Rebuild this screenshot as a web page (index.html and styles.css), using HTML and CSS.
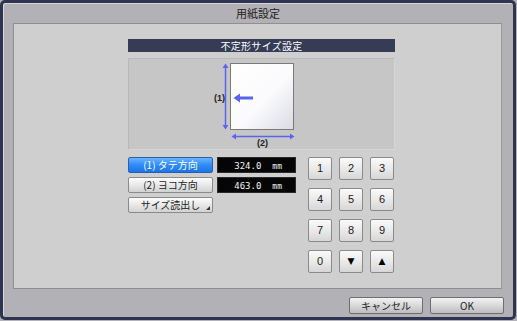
FILE: index.html
```html
<!DOCTYPE html>
<html lang="ja">
<head>
	<meta charset="UTF-8">
	<title>用紙設定</title>
	<link rel="stylesheet" href="styles.css">
</head>
<body>
	<div class="frame">
		<div class="title">用紙設定</div>
		<div class="panel">
			<div class="head">不定形サイズ設定</div>
			<div class="diagram">
				<svg width="265" height="90" viewBox="0 0 265 90">
					<defs>
						<linearGradient id="paper" x1="0" y1="0" x2="1" y2="1">
							<stop offset="0" stop-color="#ffffff"/>
							<stop offset="0.55" stop-color="#fbfbfd"/>
							<stop offset="1" stop-color="#d9dbe3"/>
						</linearGradient>
					</defs>
					<rect x="101.5" y="4.5" width="63" height="66" fill="url(#paper)" stroke="#7a7a7a"/>
					<!-- vertical (1) -->
					<line x1="96.5" y1="7" x2="96.5" y2="68" stroke="#5a64f0" stroke-width="1.5"/>
					<path d="M93.5 9 L96.5 4.5 L99.5 9 Z M93.5 66 L96.5 70.5 L99.5 66 Z" fill="#5a64f0"/>
					<!-- horizontal (2) -->
					<line x1="106" y1="77.5" x2="162" y2="77.5" stroke="#5a64f0" stroke-width="1.5"/>
					<path d="M107 74.5 L102.5 77.5 L107 80.5 Z M161 74.5 L165.5 77.5 L161 80.5 Z" fill="#5a64f0"/>
					<!-- feed arrow -->
					<line x1="110" y1="39" x2="124" y2="39" stroke="#5a64f0" stroke-width="3"/>
					<path d="M111 34.5 L104.5 39 L111 43.5 Z" fill="#5a64f0"/>
					<text x="85" y="42" class="lbl">(1)</text>
					<text x="128" y="87" class="lbl">(2)</text>
				</svg>
			</div>
			<div class="controls">
				<div class="sizes">
					<div class="row">
						<div class="btn btn-on">(1) タテ方向</div>
						<div class="value">324.0<span>mm</span></div>
					</div>
					<div class="row">
						<div class="btn">(2) ヨコ方向</div>
						<div class="value">463.0<span>mm</span></div>
					</div>
					<div class="row">
						<div class="btn btn-menu">サイズ読出し</div>
					</div>
				</div>
				<div class="pad">
					<div class="key">1</div>
					<div class="key">2</div>
					<div class="key">3</div>
					<div class="key">4</div>
					<div class="key">5</div>
					<div class="key">6</div>
					<div class="key">7</div>
					<div class="key">8</div>
					<div class="key">9</div>
					<div class="key">0</div>
					<div class="key key-arrow">▼</div>
					<div class="key key-arrow">▲</div>
				</div>
			</div>
		</div>
		<div class="footer">
			<div class="btn btn-foot">キャンセル</div>
			<div class="btn btn-foot">OK</div>
		</div>
	</div>
</body>
</html>
```

FILE: styles.css
```css
*{
	box-sizing: border-box;
	margin: 0;
	padding: 0;
}

body{
	width: 517px;
	height: 321px;
	background: #b3b2b6;
	font-family: "Noto Sans CJK JP", "Liberation Sans", sans-serif;
	color: #1e1e1e;
	overflow: hidden;
}

.frame{
	width: 516px;
	height: 320px;
	border: 3px solid #2f3550;
	border-radius: 5px;
	background: #b2b1b5;
	box-shadow: inset 1px 1px 0 #d8d8da;
	display: flex;
	flex-direction: column;
}

.title{
	height: 20px;
	line-height: 20px;
	text-align: center;
	font-size: 11px;
	color: #222;
}

.panel{
	margin: 0 11px 0 10px;
	height: 266px;
	border: 1px solid #8f8f8f;
	border-right-color: #9a9a9a;
	background: #cfcfcf;
	padding: 15px 0 0 114px;
}

.head{
	width: 267px;
	height: 13px;
	line-height: 13px;
	background: #363c55;
	color: #fff;
	font-size: 10px;
	text-align: center;
	letter-spacing: 0.3px;
}

.diagram{
	width: 267px;
	height: 92px;
	margin-top: 6px;
	background: #c6c6c6;
	border: 1px solid #b9b9b9;
	border-bottom-color: #d6d6d6;
	border-right-color: #d6d6d6;
}

.diagram svg{
	display: block;
}

.lbl{
	font-family: "Liberation Sans", sans-serif;
	font-size: 9px;
	font-weight: bold;
	fill: #222;
}

.controls{
	display: flex;
	margin-top: 7px;
	gap: 12px;
}

.sizes{
	display: flex;
	flex-direction: column;
	gap: 4px;
}

.row{
	display: flex;
	gap: 4px;
	height: 16px;
}

.btn{
	position: relative;
	width: 85px;
	height: 16px;
	line-height: 14px;
	font-size: 10px;
	text-align: center;
	border: 1px solid #8a8a8a;
	border-radius: 2px;
	background: linear-gradient(#fdfdfd, #e6e6e6 55%, #d2d2d2);
	color: #1e1e1e;
}

.btn-on{
	background: linear-gradient(#6ab4ff, #2f8cf6 50%, #1d74e6);
	border-color: #2a5fae;
	color: #fff;
}

.btn-menu::after{
	content: "";
	position: absolute;
	right: 2px;
	bottom: 2px;
	border-left: 4px solid transparent;
	border-bottom: 4px solid #333;
}

.value{
	width: 79px;
	height: 16px;
	background: #050505;
	color: #f4f4f4;
	font-family: "DejaVu Sans Mono", monospace;
	font-size: 9px;
	line-height: 16px;
	text-align: right;
	padding-right: 13px;
	border: 1px solid #2a2a2a;
}

.value span{
	margin-left: 11px;
	font-size: 8px;
}

.pad{
	display: grid;
	grid-template-columns: repeat(3, 24px);
	grid-auto-rows: 23px;
	column-gap: 7px;
	row-gap: 8px;
}

.key{
	border: 1px solid #8a8a8a;
	border-radius: 2px;
	background: linear-gradient(#fafafa, #e8e8e8 55%, #d6d6d6);
	font-family: "Liberation Sans", sans-serif;
	font-size: 11px;
	line-height: 21px;
	text-align: center;
	color: #1a1a1a;
}

.key-arrow{
	font-family: "DejaVu Sans", sans-serif;
	font-size: 9px;
	color: #000;
}

.footer{
	display: flex;
	justify-content: flex-end;
	gap: 7px;
	padding: 8px 9px 0 0;
}

.btn-foot{
	width: 74px;
	height: 17px;
	line-height: 15px;
	border-color: #6e6e6e;
	background: linear-gradient(#f2f2f2, #d6d6d6 55%, #bdbdbd);
}
```
